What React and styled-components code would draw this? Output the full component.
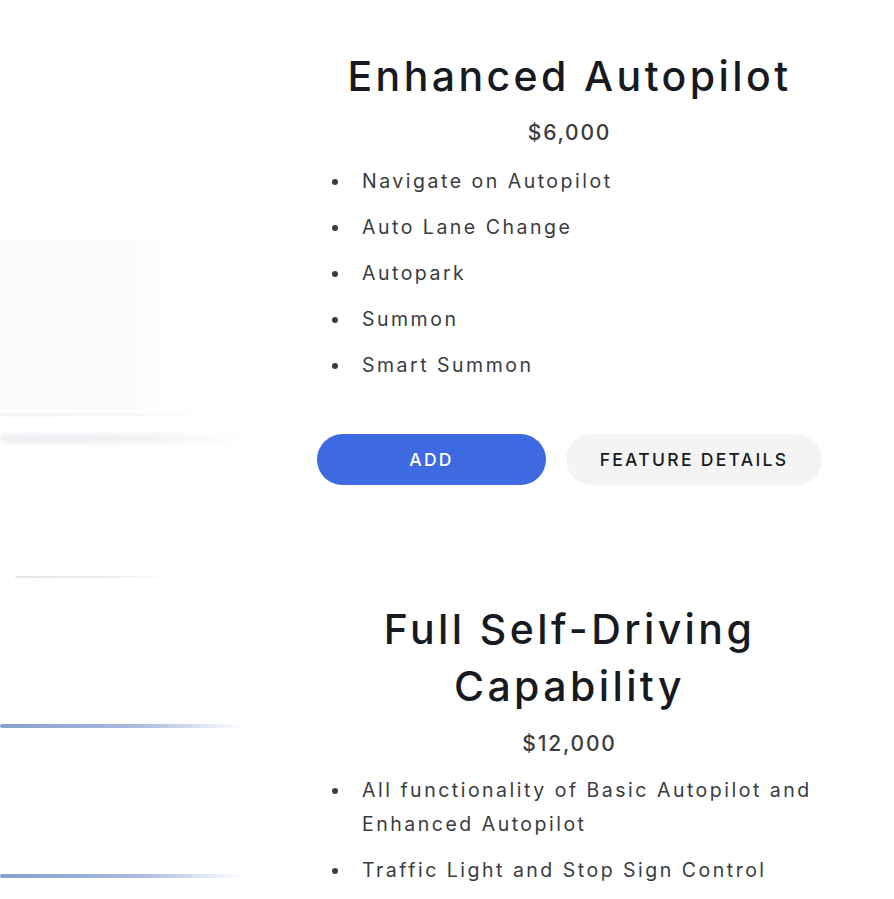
import React from "react";
import styled, { createGlobalStyle } from "styled-components";

const Global = createGlobalStyle`
  html, body { margin: 0; padding: 0; background: #ffffff; }
  body { font-family: "Inter", "Noto Sans", sans-serif; color: #393c41; }
  * { box-sizing: border-box; }
`;

const Page = styled.div`
  display: flex;
  width: 894px;
  height: 899px;
  overflow: hidden;
  background: #fff;
`;

const Decor = styled.div`
  width: 317px;
  flex: none;
  display: flex;
  flex-direction: column;
  align-items: flex-start;
`;

const Panel = styled.div`
  margin-top: ${(p) => p.$top}px;
  width: 165px;
  height: 170px;
  background: linear-gradient(90deg, #fafbfc 0%, #fbfbfc 80%, #ffffff 100%);
`;

const Streak = styled.div`
  margin-top: ${(p) => p.$top}px;
  margin-left: ${(p) => p.$left || 0}px;
  width: ${(p) => p.$w}px;
  height: ${(p) => p.$h}px;
  border-radius: ${(p) => p.$h}px;
  background: linear-gradient(90deg, ${(p) => p.$from} 0%, ${(p) => p.$mid} 55%, rgba(255,255,255,0) 100%);
  filter: blur(${(p) => p.$blur || 0}px);
`;

const Content = styled.div`
  width: 505px;
  flex: none;
  display: flex;
  flex-direction: column;
  padding-top: 50px;
`;

const Title = styled.h2`
  margin: ${(p) => p.$mt || 0}px 0 0;
  font-size: 41px;
  line-height: ${(p) => p.$lh || 52}px;
  font-weight: 500;
  color: #171a20;
  text-align: center;
  letter-spacing: 3.4px;
`;

const Price = styled.div`
  margin-top: ${(p) => p.$mt}px;
  font-size: 21px;
  line-height: 24px;
  font-weight: 500;
  color: #393c41;
  text-align: center;
  letter-spacing: 1.8px;
`;

const List = styled.ul`
  list-style: none;
  margin: ${(p) => p.$mt}px 0 0;
  padding: 0;
  display: flex;
  flex-direction: column;
  gap: 12px;
`;

const Item = styled.li`
  display: grid;
  grid-template-columns: 45px 1fr;
  font-size: 19.5px;
  line-height: 34px;
  color: #393c41;
  letter-spacing: 2.5px;

  &::before {
    content: "";
    width: 6px;
    height: 6px;
    border-radius: 50%;
    background: #393c41;
    margin: 15px 0 0 15px;
  }
`;

const Actions = styled.div`
  display: flex;
  gap: 20px;
  margin-top: 52px;
`;

const Button = styled.button`
  height: 51px;
  width: ${(p) => p.$w}px;
  border: none;
  border-radius: 26px;
  background: ${(p) => (p.$primary ? "#3e6ae1" : "#f4f4f4")};
  color: ${(p) => (p.$primary ? "#ffffff" : "#171a20")};
  font-family: "Inter", "Noto Sans", sans-serif;
  font-size: 17.5px;
  font-weight: 500;
  letter-spacing: 2.3px;
  padding: 0;
  cursor: pointer;
`;

const enhancedItems = ["Navigate on Autopilot", "Auto Lane Change", "Autopark", "Summon", "Smart Summon"];

export default function App() {
  return (
    <>
      <Global />
      <Page>
        <Decor>
          <Panel $top={240} />
          <Streak $top={3} $w={210} $h={3} $from="#eef0f2" $mid="#f2f3f5" $blur={1} />
          <Streak $top={18} $w={245} $h={9} $from="#eaecef" $mid="#eff0f3" $blur={2.5} />
          <Streak $top={133} $left={15} $w={150} $h={2} $from="#e4e6ea" $mid="#e8e9ec" $blur={0.5} />
          <Streak $top={146} $w={245} $h={4} $from="#86a0cf" $mid="#a7b9df" $blur={0.6} />
          <Streak $top={146} $w={245} $h={4} $from="#86a0cf" $mid="#a7b9df" $blur={0.6} />
        </Decor>
        <Content>
          <Title>Enhanced Autopilot</Title>
          <Price $mt={19}>$6,000</Price>
          <List $mt={19}>
            {enhancedItems.map((t) => (
              <Item key={t}>{t}</Item>
            ))}
          </List>
          <Actions>
            <Button $primary $w={229}>ADD</Button>
            <Button $w={256}>FEATURE DETAILS</Button>
          </Actions>
          <Title $mt={116} $lh={57}>
            Full Self-Driving
            <br />
            Capability
          </Title>
          <Price $mt={17}>$12,000</Price>
          <List $mt={17}>
            <Item>All functionality of Basic Autopilot and Enhanced Autopilot</Item>
            <Item>Traffic Light and Stop Sign Control</Item>
          </List>
        </Content>
      </Page>
    </>
  );
}
